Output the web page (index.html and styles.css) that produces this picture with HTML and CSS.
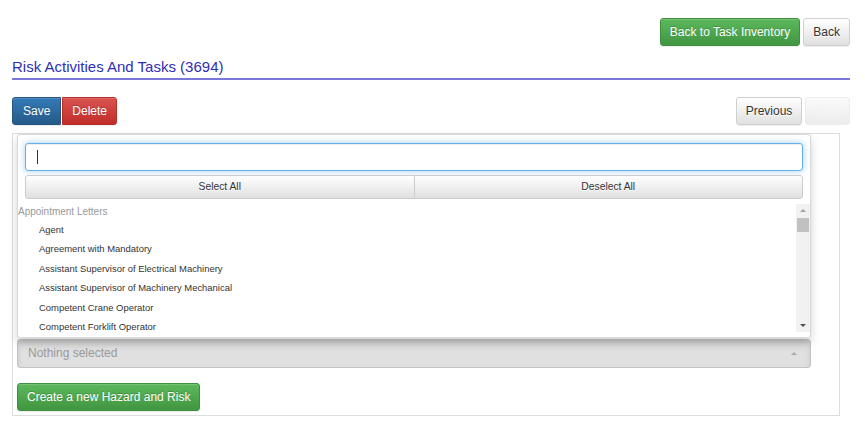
FILE: index.html
```html
<!DOCTYPE html>
<html>
<head>
<meta charset="utf-8">
<title>Risk Activities And Tasks</title>
<link rel="stylesheet" href="styles.css">
</head>
<body>
<div class="page">
  <div class="topbar">
    <button class="btn btn-success">Back to Task Inventory</button>
    <button class="btn btn-default">Back</button>
  </div>
  <h2 class="title">Risk Activities And Tasks (3694)</h2>
  <div class="toolbar">
    <div class="btn-group">
      <button class="btn btn-primary">Save</button><button class="btn btn-danger">Delete</button>
    </div>
    <div class="pager">
      <button class="btn btn-default">Previous</button>
      <button class="btn btn-default btn-disabled">Next</button>
    </div>
  </div>
  <div class="panel">
    <div class="form-rows"></div>
    <div class="select-wrap">
      <div class="menu">
        <div class="search"><div class="search-input"><span class="text-caret"></span></div></div>
        <div class="actions">
          <button class="act-btn">Select All</button><button class="act-btn">Deselect All</button>
        </div>
        <div class="list-wrap">
          <ul class="list">
            <li class="header">Appointment Letters</li>
            <li class="item">Agent</li>
            <li class="item">Agreement with Mandatory</li>
            <li class="item">Assistant Supervisor of Electrical Machinery</li>
            <li class="item">Assistant Supervisor of Machinery Mechanical</li>
            <li class="item">Competent Crane Operator</li>
            <li class="item">Competent Forklift Operator</li>
          </ul>
          <div class="scrollbar">
            <span class="arrow arrow-up"></span>
            <span class="thumb"></span>
            <span class="track"></span>
            <span class="arrow arrow-down"></span>
          </div>
        </div>
      </div>
      <div class="select-btn"><span class="placeholder">Nothing selected</span><span class="caret-up"></span></div>
    </div>
    <button class="btn btn-success create">Create a new Hazard and Risk</button>
  </div>
</div>
</body>
</html>
```

FILE: styles.css
```css
* { box-sizing: border-box; }
html, body { margin: 0; padding: 0; background: #fff; }
body {
  font-family: "Liberation Sans", Arial, sans-serif;
  font-size: 12px;
  color: #333;
}
.page { padding: 0 15px 0 12px; }

.btn {
  display: inline-block;
  font-family: inherit;
  font-size: 12px;
  line-height: 16px;
  padding: 5px 9px;
  border: 1px solid transparent;
  border-radius: 3px;
  cursor: pointer;
  white-space: nowrap;
  box-shadow: inset 0 1px 0 rgba(255,255,255,.15), 0 1px 1px rgba(0,0,0,.075);
}
.btn-success {
  color: #fff;
  background: linear-gradient(to bottom, #5cb85c 0, #419641 100%);
  border-color: #3e8f3e;
  text-shadow: 0 -1px 0 rgba(0,0,0,.2);
}
.btn-primary {
  color: #fff;
  background: linear-gradient(to bottom, #337ab7 0, #265a88 100%);
  border-color: #245580;
  text-shadow: 0 -1px 0 rgba(0,0,0,.2);
}
.btn-danger {
  color: #fff;
  background: linear-gradient(to bottom, #d9534f 0, #c12e2a 100%);
  border-color: #b92c28;
  text-shadow: 0 -1px 0 rgba(0,0,0,.2);
}
.btn-default {
  color: #333;
  background: linear-gradient(to bottom, #fff 0, #e0e0e0 100%);
  border-color: #d0d0d0;
  text-shadow: 0 1px 0 #fff;
}
.btn-disabled {
  color: #f4f4f4;
  background: linear-gradient(to bottom, #fafafa 0, #ececec 100%);
  border-color: #ececec;
  box-shadow: none;
  text-shadow: none;
}

.topbar {
  display: flex;
  justify-content: flex-end;
  gap: 3px;
  margin-top: 18px;
}

.title {
  margin: 12px 0 0;
  font-size: 15px;
  line-height: 18px;
  font-weight: normal;
  color: #2f2fb5;
  padding-bottom: 2px;
  border-bottom: 2px solid #7878d8;
}

.toolbar {
  display: flex;
  justify-content: space-between;
  margin-top: 17px;
}
.btn-group { display: flex; }
.btn-group .btn-primary { border-radius: 3px 0 0 3px; padding: 5px 10px; }
.btn-group .btn-danger { border-radius: 0 3px 3px 0; margin-left: 1px; }
.pager { display: flex; gap: 3px; }

.panel {
  margin: 8px 10px 0 0;
  border: 1px solid #ddd;
  padding: 0 28px 4px 4px;
}
.form-rows { height: 205px; }

.select-wrap { position: relative; }

.menu {
  position: absolute;
  left: 0;
  right: 0;
  bottom: 100%;
  margin-bottom: 1px;
  background: #fff;
  border: 1px solid rgba(0,0,0,.15);
  border-radius: 3px;
  box-shadow: 0 5px 10px rgba(0,0,0,.175);
  padding-bottom: 3px;
  z-index: 2;
}
.search { padding: 8px 7px 0; }
.search-input {
  height: 28px;
  border: 1px solid #66afe9;
  border-radius: 3px;
  box-shadow: inset 0 1px 1px rgba(0,0,0,.075), 0 0 7px rgba(102,175,233,.6);
  padding: 6px 11px;
}
.text-caret {
  display: block;
  width: 1px;
  height: 14px;
  background: #333;
}
.actions {
  display: flex;
  padding: 4px 7px 0;
}
.act-btn {
  flex: 1;
  font-family: inherit;
  font-size: 10.3px;
  line-height: 14px;
  height: 24px;
  color: #333;
  border: 1px solid #ccc;
  background: linear-gradient(to bottom, #fff 0, #e0e0e0 100%);
  text-shadow: 0 1px 0 #fff;
  padding: 4px 6px;
}
.act-btn:first-child { border-radius: 3px 0 0 3px; }
.act-btn:last-child { border-radius: 0 3px 3px 0; margin-left: -1px; }

.list-wrap {
  display: flex;
  margin-top: 4px;
  height: 131px;
}
.list {
  flex: 1;
  list-style: none;
  margin: 0;
  padding: 0;
  overflow: hidden;
}
.list .header {
  font-size: 10px;
  line-height: 17px;
  height: 17px;
  color: #999;
  padding-left: 0;
}
.list .item {
  font-size: 9.45px;
  line-height: 19.4px;
  height: 19.4px;
  color: #333;
  padding-left: 21px;
  white-space: nowrap;
}

.scrollbar {
  width: 14px;
  display: flex;
  flex-direction: column;
  align-items: center;
  background: #f1f1f1;
  margin-top: 1px;
  margin-bottom: 2px;
}
.arrow {
  width: 0;
  height: 0;
  border-left: 3.5px solid transparent;
  border-right: 3.5px solid transparent;
  margin: 5px 0;
}
.arrow-up { border-bottom: 3.5px solid #a3a3a3; }
.arrow-down { border-top: 3.5px solid #505050; }
.thumb {
  width: 12px;
  height: 14px;
  background: #c1c1c1;
  margin-top: 1px;
}
.track { flex: 1; }

.select-btn {
  display: flex;
  align-items: center;
  justify-content: space-between;
  width: 100%;
  height: 29px;
  font-size: 12px;
  line-height: 17px;
  padding: 5px 13px 5px 10px;
  border: 1px solid #c4c4c4;
  border-radius: 3px;
  background: #e0e0e0;
  box-shadow: inset 0 3px 5px rgba(0,0,0,.125);
}
.placeholder { color: #999; }
.caret-up {
  width: 0;
  height: 0;
  border-left: 3px solid transparent;
  border-right: 3px solid transparent;
  border-bottom: 3px solid #aaa;
}

.create { margin-top: 15px; }
```
